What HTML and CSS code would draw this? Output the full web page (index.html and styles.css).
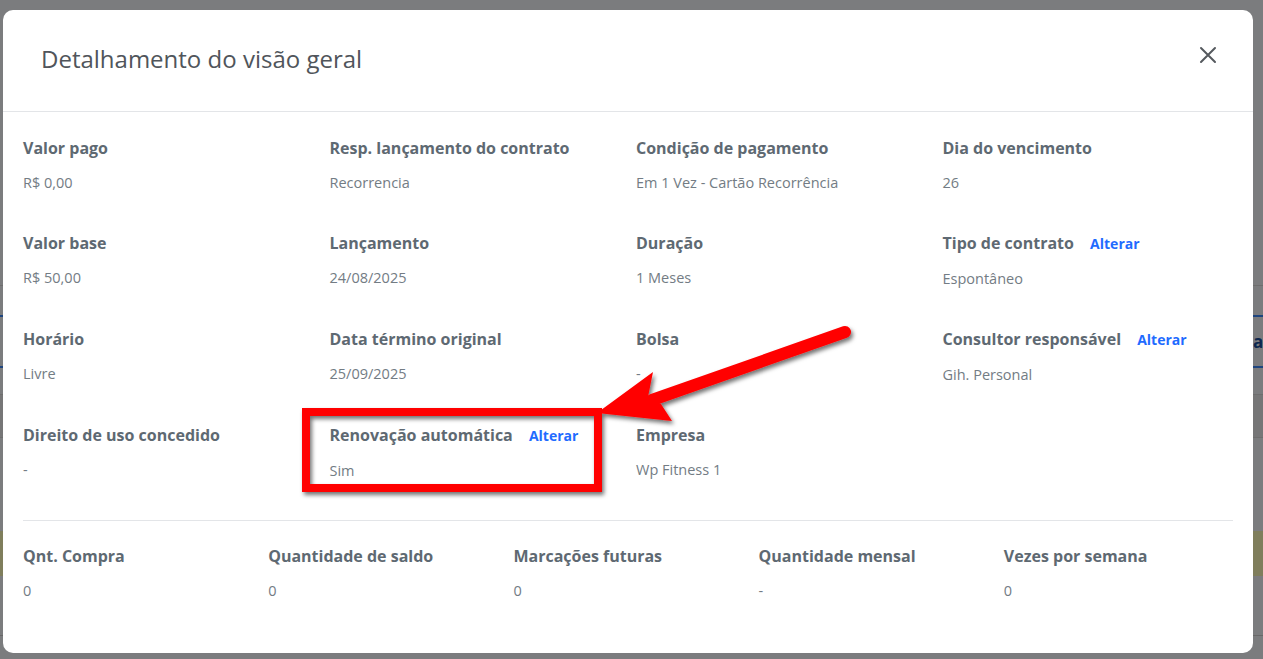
FILE: index.html
```html
<!DOCTYPE html>
<html lang="pt-BR">

<head>
    <meta charset="UTF-8">
    <meta name="viewport" content="width=device-width, initial-scale=1.0">
    <title>Detalhamento do visão geral</title>
    <link rel="stylesheet" href="styles.css">
</head>

<body>
    <!-- page behind the modal -->
    <div class="page">
        <div class="page-head"></div>
        <div class="page-tabs">
            <span class="tab-link">a</span>
        </div>
        <div class="page-row"></div>
        <div class="page-row shaded"></div>
        <div class="page-alert"></div>
        <div class="page-foot"></div>
    </div>

    <div class="overlay">
        <div class="modal">
            <div class="modal-header">
                <h2 class="modal-title">Detalhamento do visão geral</h2>
                <button class="close-btn" type="button" aria-label="Fechar">
                    <svg width="24" height="24" viewBox="0 0 24 24">
                        <path d="M5 5 L19 19 M19 5 L5 19" stroke="#55595e" stroke-width="2" stroke-linecap="round" fill="none" />
                    </svg>
                </button>
            </div>

            <div class="modal-body">
                <div class="info-grid">
                    <div class="field">
                        <div class="field-label">Valor pago</div>
                        <div class="field-value">R$ 0,00</div>
                    </div>
                    <div class="field">
                        <div class="field-label">Resp. lançamento do contrato</div>
                        <div class="field-value">Recorrencia</div>
                    </div>
                    <div class="field">
                        <div class="field-label">Condição de pagamento</div>
                        <div class="field-value">Em 1 Vez - Cartão Recorrência</div>
                    </div>
                    <div class="field">
                        <div class="field-label">Dia do vencimento</div>
                        <div class="field-value">26</div>
                    </div>

                    <div class="field">
                        <div class="field-label">Valor base</div>
                        <div class="field-value">R$ 50,00</div>
                    </div>
                    <div class="field">
                        <div class="field-label">Lançamento</div>
                        <div class="field-value">24/08/2025</div>
                    </div>
                    <div class="field">
                        <div class="field-label">Duração</div>
                        <div class="field-value">1 Meses</div>
                    </div>
                    <div class="field">
                        <div class="field-label">Tipo de contrato <a href="#" class="edit-link">Alterar</a></div>
                        <div class="field-value">Espontâneo</div>
                    </div>

                    <div class="field">
                        <div class="field-label">Horário</div>
                        <div class="field-value">Livre</div>
                    </div>
                    <div class="field">
                        <div class="field-label">Data término original</div>
                        <div class="field-value">25/09/2025</div>
                    </div>
                    <div class="field">
                        <div class="field-label">Bolsa</div>
                        <div class="field-value">-</div>
                    </div>
                    <div class="field">
                        <div class="field-label">Consultor responsável <a href="#" class="edit-link">Alterar</a></div>
                        <div class="field-value">Gih. Personal</div>
                    </div>

                    <div class="field">
                        <div class="field-label">Direito de uso concedido</div>
                        <div class="field-value">-</div>
                    </div>
                    <div class="field">
                        <div class="field-label">Renovação automática <a href="#" class="edit-link">Alterar</a></div>
                        <div class="field-value">Sim</div>
                    </div>
                    <div class="field">
                        <div class="field-label">Empresa</div>
                        <div class="field-value">Wp Fitness 1</div>
                    </div>
                </div>

                <hr class="divider">

                <div class="info-grid cols-5">
                    <div class="field">
                        <div class="field-label">Qnt. Compra</div>
                        <div class="field-value">0</div>
                    </div>
                    <div class="field">
                        <div class="field-label">Quantidade de saldo</div>
                        <div class="field-value">0</div>
                    </div>
                    <div class="field">
                        <div class="field-label">Marcações futuras</div>
                        <div class="field-value">0</div>
                    </div>
                    <div class="field">
                        <div class="field-label">Quantidade mensal</div>
                        <div class="field-value">-</div>
                    </div>
                    <div class="field">
                        <div class="field-label">Vezes por semana</div>
                        <div class="field-value">0</div>
                    </div>
                </div>
            </div>
        </div>

        <!-- red highlight drawn over the screenshot -->
        <svg class="annotation" width="1263" height="659" viewBox="0 0 1263 659">
            <defs>
                <filter id="shadow" x="-10%" y="-10%" width="120%" height="130%">
                    <feDropShadow dx="2" dy="3" stdDeviation="2" flood-color="#000" flood-opacity="0.55" />
                </filter>
            </defs>
            <g filter="url(#shadow)">
                <rect x="306" y="412" width="292" height="76" fill="none" stroke="#ff0000" stroke-width="8" />
                <line x1="845" y1="332" x2="652" y2="400" stroke="#ff0000" stroke-width="12" stroke-linecap="round" />
                <polygon points="597,413 653,372 648,397 661,404 672,421" fill="#ff0000" />
            </g>
        </svg>
    </div>
</body>

</html>
```

FILE: styles.css
```css
* {
    box-sizing: border-box;
}

body {
    margin: 0;
    font-family: "Open Sans", Lato, sans-serif;
    background-color: #f6f8fc;
    height: 659px;
    overflow: hidden;
}

/* background page */

.page-head {
    height: 286px;
    border-bottom: 1px solid #dcdcdc;
}

.page-tabs {
    margin-top: 29px;
    height: 53px;
    border-top: 2px solid #3d8bff;
    border-bottom: 2px solid #3d8bff;
    display: flex;
    align-items: center;
}

.tab-link {
    margin-left: 1253px;
    font-size: 17px;
    font-weight: 700;
    color: #1b4f9c;
}

.page-row {
    height: 27px;
    border-bottom: 1px solid #dcdcdc;
}

.page-row.shaded {
    height: 43px;
    background: #ececee;
}

.page-alert {
    margin-top: 93px;
    height: 45px;
    background: #fefdb8;
}

.page-foot {
    height: 60px;
    border-bottom: 1px solid #d0d0d0;
}

/* modal */

.overlay {
    position: fixed;
    inset: 0;
    background: rgba(0, 0, 0, 0.5);
    padding: 10px 0 0 3px;
}

.modal {
    width: 1250px;
    background: #fff;
    border-radius: 10px;
}

.modal-header {
    height: 102px;
    display: flex;
    align-items: center;
    justify-content: space-between;
    padding: 0 33px 3px 38px;
    border-bottom: 1px solid #e3e5e8;
}

.modal-title {
    margin: 0;
    font-size: 24px;
    font-weight: 400;
    line-height: 32px;
    color: #50555b;
}

.close-btn {
    align-self: flex-start;
    margin-top: 33px;
    padding: 0;
    border: none;
    background: none;
    cursor: pointer;
    width: 24px;
    height: 24px;
}

.modal-body {
    padding: 24px 20px 51px;
}

.info-grid {
    display: grid;
    grid-template-columns: repeat(4, 1fr);
    column-gap: 16px;
    row-gap: 37px;
}

.info-grid.cols-5 {
    grid-template-columns: repeat(5, 1fr);
}

.field-label {
    font-size: 16px;
    font-weight: 700;
    line-height: 24px;
    color: #5e6972;
    white-space: nowrap;
}

.field-value {
    margin-top: 12px;
    font-size: 14.5px;
    line-height: 22px;
    color: #737c84;
}

.edit-link {
    margin-left: 12px;
    font-size: 14px;
    font-weight: 700;
    color: #1f6bff;
    text-decoration: none;
}

.divider {
    margin: 38px 0 23px;
    border: none;
    border-top: 1px solid #e3e5e8;
}

.annotation {
    position: absolute;
    left: 0;
    top: 0;
    pointer-events: none;
}
```
